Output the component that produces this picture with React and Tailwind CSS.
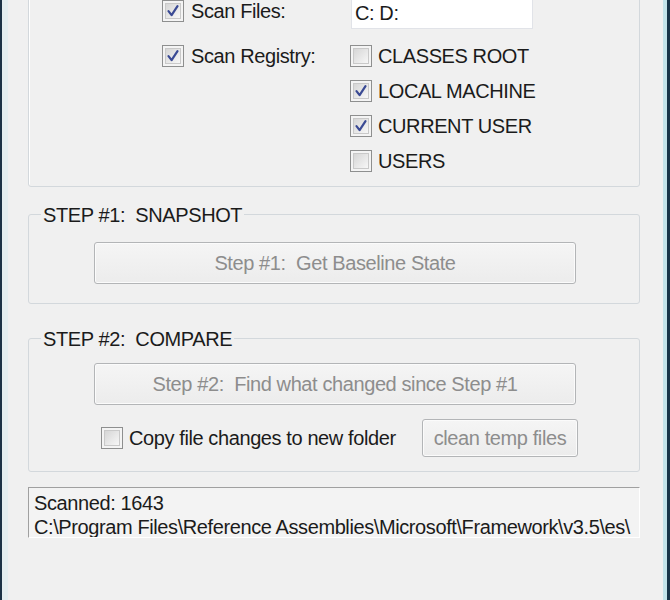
import React from "react";

const CheckBox = ({ checked }) => {
    return (
        <span className="flex h-[22px] w-[22px] shrink-0 border border-[#8e8f8f] bg-[#f4f4f4] p-[2px]">
            <span className="flex flex-1 items-center justify-center border border-[#c9c9c9] bg-gradient-to-br from-[#d6d6d6] to-[#f7f7f7]">
                {checked && (
                    <svg width="14" height="14" viewBox="0 0 14 14" fill="none">
                        <path
                            d="M2.5 7.2 L5.6 11.2 L11.5 2.2"
                            stroke="#3a4a94"
                            strokeWidth="2.2"
                            strokeLinecap="round"
                            strokeLinejoin="round"
                        />
                    </svg>
                )}
            </span>
        </span>
    );
};

const Check = ({ checked, label, gap = "gap-[7px]" }) => {
    return (
        <label className={`flex items-center ${gap}`}>
            <CheckBox checked={checked} />
            <span className="whitespace-nowrap">{label}</span>
        </label>
    );
};

const Button = ({ children, className }) => {
    return (
        <div
            className={`flex items-center justify-center rounded-[3px] border border-[#b3b5b7] bg-gradient-to-b from-[#f5f5f5] to-[#ececec] text-[#8d8d8d] shadow-[inset_0_0_0_1px_#fbfbfb] whitespace-pre ${className}`}
        >
            {children}
        </div>
    );
};

const GroupBox = ({ title, className, children }) => {
    return (
        <fieldset className={`ml-[20px] w-[612px] rounded-[3px] border border-[#d3d8dc] ${className}`}>
            <legend className="ml-[12px] px-[2px] pt-[2px] leading-[22px] whitespace-pre text-[#1b1b1b]">{title}</legend>
            {children}
        </fieldset>
    );
};

const registryKeys = [
    { label: "CLASSES ROOT", checked: false },
    { label: "LOCAL MACHINE", checked: true },
    { label: "CURRENT USER", checked: true },
    { label: "USERS", checked: false },
];

export default function App() {
    return (
        <div className="flex h-[600px] w-[670px] overflow-hidden bg-[#f0f0f0] font-['Liberation_Sans',Arial,sans-serif] text-[20px] tracking-[-0.4px] text-[#1b1b1b]">
            {/* window frame left */}
            <div className="flex w-[8px] shrink-0">
                <div className="w-[2px] bg-[#1c3246]"></div>
                <div className="flex-1 bg-[#e4eef0]"></div>
            </div>

            <div className="flex-1">
                {/* scan options */}
                <div className="-mt-[21px] ml-[20px] w-[612px] rounded-[3px] border border-[#d3d8dc] pt-[14px] pb-[8px] pl-[133px] shadow-[inset_1px_1px_0_#ffffff]">
                    <div className="flex h-[34px] items-center">
                        <div className="w-[188px]">
                            <Check checked label="Scan Files:" />
                        </div>
                        <div className="ml-[1px] flex h-[36px] w-[182px] items-center border border-[#e1e3e8] bg-white pt-[4px] pl-[3px]">
                            C: D:
                        </div>
                    </div>
                    <div className="mt-[10px] flex">
                        <div className="flex h-[35px] w-[188px] items-center">
                            <Check checked label="Scan Registry:" />
                        </div>
                        <div className="flex flex-col">
                            {registryKeys.map((key) => (
                                <div key={key.label} className="flex h-[35px] items-center">
                                    <Check checked={key.checked} label={key.label} gap="gap-[6px]" />
                                </div>
                            ))}
                        </div>
                    </div>
                </div>

                {/* step 1 */}
                <GroupBox title="STEP #1:  SNAPSHOT" className="mt-[15px]">
                    <div className="pt-[16px] pb-[19px] pl-[65px]">
                        <Button className="h-[42px] w-[482px]">Step #1:  Get Baseline State</Button>
                    </div>
                </GroupBox>

                {/* step 2 */}
                <GroupBox title="STEP #2:  COMPARE" className="mt-[22px]">
                    <div className="pt-[13px] pb-[14px] pl-[65px]">
                        <Button className="h-[42px] w-[482px]">Step #2:  Find what changed since Step #1</Button>
                        <div className="mt-[14px] ml-[7px] flex h-[38px] w-[477px] items-center justify-between">
                            <Check label="Copy file changes to new folder" gap="gap-[6px]" />
                            <Button className="h-[38px] w-[156px]">clean temp files</Button>
                        </div>
                    </div>
                </GroupBox>

                {/* status */}
                <div className="mt-[15px] ml-[20px] h-[51px] w-[612px] overflow-hidden border border-t-[#a0a0a0] border-l-[#a0a0a0] border-r-white border-b-white bg-[#f3f3f3] pt-[3px] pl-[5px] leading-[24px] whitespace-nowrap">
                    <div>Scanned: 1643</div>
                    <div>C:\Program Files\Reference Assemblies\Microsoft\Framework\v3.5\es\</div>
                </div>
            </div>

            {/* window frame right */}
            <div className="flex w-[7px] shrink-0">
                <div className="w-[4px] bg-[#c2e3e9]"></div>
                <div className="flex-1 bg-[#173448]"></div>
            </div>
        </div>
    );
}
